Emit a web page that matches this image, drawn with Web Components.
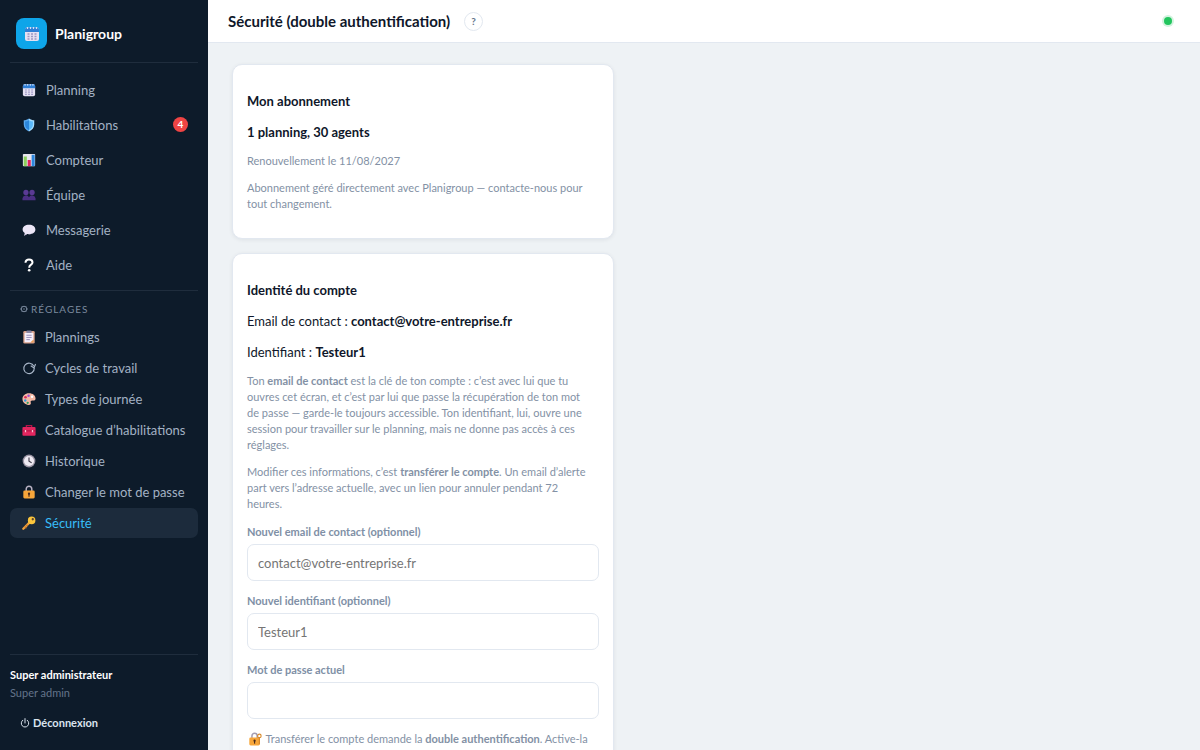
<!DOCTYPE html>
<html lang="fr">
<head>
<meta charset="utf-8">
<meta name="viewport" content="width=device-width, initial-scale=1">
<title>Planigroup</title>
<style>
   body {
      margin: 0;
      font-family: Lato, "Liberation Sans", sans-serif;
      font-size: 13px;
      line-height: 20px;
      color: #0f172a;
      background: #eef2f5;
   }
</style>
</head>
<body>

<plani-app>
   <plani-sidebar slot="sidebar">
      <plani-link icon="calendar">Planning</plani-link>
      <plani-link icon="shield" badge="4">Habilitations</plani-link>
      <plani-link icon="chart">Compteur</plani-link>
      <plani-link icon="people">Équipe</plani-link>
      <plani-link icon="bubble">Messagerie</plani-link>
      <plani-link icon="question">Aide</plani-link>

      <plani-link slot="settings" small icon="clipboard">Plannings</plani-link>
      <plani-link slot="settings" small icon="cycle">Cycles de travail</plani-link>
      <plani-link slot="settings" small icon="palette">Types de journée</plani-link>
      <plani-link slot="settings" small icon="toolbox">Catalogue d’habilitations</plani-link>
      <plani-link slot="settings" small icon="clock">Historique</plani-link>
      <plani-link slot="settings" small icon="lock">Changer le mot de passe</plani-link>
      <plani-link slot="settings" small active icon="key">Sécurité</plani-link>

      <span slot="user">Super administrateur</span>
      <span slot="role">Super admin</span>
   </plani-sidebar>

   <plani-topbar slot="topbar">Sécurité (double authentification)</plani-topbar>

   <plani-card>
      <span slot="title">Mon abonnement</span>
      <p><b>1 planning, 30 agents</b></p>
      <p class="hint">Renouvellement le 11/08/2027</p>
      <p class="hint">Abonnement géré directement avec Planigroup — contacte-nous pour tout changement.</p>
   </plani-card>

   <plani-card>
      <span slot="title">Identité du compte</span>
      <p>Email de contact : <b>contact@votre-entreprise.fr</b></p>
      <p>Identifiant : <b>Testeur1</b></p>
      <p class="hint">Ton <b>email de contact</b> est la clé de ton compte : c’est avec lui que tu ouvres cet écran, et c’est par lui que passe la récupération de ton mot de passe — garde-le toujours accessible. Ton identifiant, lui, ouvre une session pour travailler sur le planning, mais ne donne pas accès à ces réglages.</p>
      <p class="hint">Modifier ces informations, c’est <b>transférer le compte</b>. Un email d’alerte part vers l’adresse actuelle, avec un lien pour annuler pendant 72 heures.</p>
      <plani-field type="email" label="Nouvel email de contact (optionnel)" placeholder="contact@votre-entreprise.fr"></plani-field>
      <plani-field type="text" label="Nouvel identifiant (optionnel)" placeholder="Testeur1"></plani-field>
      <plani-field type="password" label="Mot de passe actuel"></plani-field>
      <p class="hint"><plani-icon name="lockkey"></plani-icon> Transférer le compte demande la <b>double authentification</b>. Active-la</p>
   </plani-card>
</plani-app>

<script>
const icons = {
   calendar: `
      <rect x="1" y="1.500" width="14" height="13.500" rx="2" fill="#e4e0f2"/>
      <path d="M1 6V3.500a2 2 0 0 1 2-2h10a2 2 0 0 1 2 2V6z" fill="#2f7fd6"/>
      <path d="M3.500 1v2M6.500 1v2M9.500 1v2M12.500 1v2" stroke="#cfe0f5" stroke-width="1.200"/>
      <path d="M3.500 8h2M7 8h2M10.500 8h2M3.500 10.500h2M7 10.500h2M10.500 10.500h2M3.500 13h2M7 13h2M10.500 13h2" stroke="#9d97c4" stroke-width="1.300"/>`,
   shield: `
      <path d="M8 .5C6 2 4 2.500 2 2.500v5c0 3.700 2.500 6.500 6 8z" fill="#5aa9ee"/>
      <path d="M8 .5c2 1.500 4 2 6 2v5c0 3.700-2.500 6.500-6 8z" fill="#a3dcff"/>
      <path d="M8 2.500C6.500 3.500 5 4 3.500 4v3.500c0 2.700 1.700 5 4.500 6.300z" fill="#2b86da"/>
      <path d="M8 2.500c1.500 1 3 1.500 4.500 1.500v3.500c0 2.700-1.700 5-4.500 6.300z" fill="#5ab8fa"/>`,
   chart: `
      <rect x="1" y="1" width="14" height="14" rx="1" fill="#e8e6ef"/>
      <rect x="2" y="4" width="3.500" height="11" fill="#8ccf5c"/>
      <rect x="6.500" y="8" width="3.500" height="7" fill="#e0245e"/>
      <rect x="11" y="2" width="3.500" height="13" fill="#2c86dc"/>`,
   people: `
      <circle cx="4.500" cy="5" r="3" fill="#5a3a94"/>
      <circle cx="11.500" cy="5" r="3" fill="#5a3a94"/>
      <path d="M0.500 14v-2a4 4 0 0 1 7.500-1.500A4 4 0 0 1 15.500 12v2z" fill="#4b2f83"/>`,
   bubble: `
      <path d="M8 2c4.200 0 7.300 2.300 7.300 5.400S12.200 12.800 8 12.800c-.8 0-1.500-.1-2.200-.2L2.500 14.500l.6-3.200C1.600 10.300.7 9 .7 7.400.7 4.300 3.800 2 8 2z" fill="#ece6f6"/>
      <path d="M4 12.200c4.500 1.200 9.500-.5 11-3.500-.8 2.500-3.600 4.100-7 4.100-.8 0-1.500-.1-2.200-.2L2.500 14.500z" fill="#c9bede"/>`,
   question: `
      <path d="M4 5.300C4 3 5.700 1.800 8 1.800s4 1.300 4 3.300c0 2.600-3.800 2.500-3.800 5.900" fill="none" stroke="#fff" stroke-width="2.300"/>
      <circle cx="8.200" cy="14" r="1.500" fill="#fff"/>`,
   clipboard: `
      <rect x="1.500" y="1" width="13" height="14.500" rx="1.500" fill="#d9a088"/>
      <path d="M3 3h10v8l-3 3H3z" fill="#f4effb"/>
      <path d="M13 11v3h-3z" fill="#f0a04b"/>
      <rect x="5" y="0.500" width="6" height="3" rx="1" fill="#8a86a3"/>
      <path d="M5 6h6M5 8.500h6M5 11h4" stroke="#8f83b5" stroke-width="1"/>`,
   cycle: `
      <path d="M13.500 6A6 6 0 1 0 14 8" fill="none" stroke="#a9b7c9" stroke-width="1.300"/>
      <path d="M15.500 3.500 13.700 8 10 5.500" fill="none" stroke="#a9b7c9" stroke-width="1.300"/>`,
   palette: `
      <path d="M8 1.500c4.500 0 7.500 2.500 7.500 6 0 2-1.500 2.500-3 2.200-2-.4-3 .6-2.500 2.300.6 2-.5 3-2.500 2.800C3.500 14.400.5 11.500.5 8S3.500 1.500 8 1.500z" fill="#f3b8a4"/>
      <circle cx="4" cy="6" r="1.500" fill="#d92c5a"/>
      <circle cx="7.500" cy="4.200" r="1.400" fill="#a04bd0"/>
      <circle cx="11.500" cy="5.500" r="1.400" fill="#fff"/>
      <circle cx="3.700" cy="9.700" r="1.400" fill="#2c9be0"/>
      <circle cx="6.500" cy="12.300" r="1.300" fill="#27a35b"/>`,
   toolbox: `
      <path d="M5 5V3h6v2" fill="none" stroke="#b3154a" stroke-width="1.500"/>
      <rect x="0.500" y="4.500" width="15" height="10" rx="1.200" fill="#e3265f"/>
      <path d="M.5 9h15" stroke="#a5103f" stroke-width="1"/>
      <path d="M4 8v2.500M12 8v2.500" stroke="#f9c0d2" stroke-width="1.500"/>`,
   clock: `
      <circle cx="8" cy="8" r="7.300" fill="#9a94a3"/>
      <circle cx="8" cy="8" r="5.800" fill="#eeeaf2"/>
      <path d="M8 4v4.300l3 1.700" fill="none" stroke="#3c3846" stroke-width="1.300"/>`,
   lock: `
      <path d="M4.800 7V4.500a3.200 3.200 0 0 1 6.400 0V7" fill="none" stroke="#b9b3c4" stroke-width="1.700"/>
      <rect x="1.500" y="6.300" width="13" height="9" rx="1.500" fill="#f7a63a"/>
      <circle cx="8" cy="10" r="1.300" fill="#4a2b1c"/>
      <path d="M8 10v3.300" stroke="#4a2b1c" stroke-width="1.300"/>`,
   lockkey: `
      <path d="M4.500 7V4.500a3 3 0 0 1 6 0V7" fill="none" stroke="#a59eb2" stroke-width="1.700"/>
      <rect x="1.500" y="6.300" width="12" height="9" rx="1.500" fill="#f7a63a"/>
      <circle cx="7.500" cy="10" r="1.300" fill="#4a2b1c"/>
      <path d="M7.500 10v3.300" stroke="#4a2b1c" stroke-width="1.300"/>
      <circle cx="13" cy="4.500" r="2" fill="none" stroke="#d98a2b" stroke-width="1.300"/>
      <path d="M13 6.500V14" stroke="#d98a2b" stroke-width="1.400"/>`,
   key: `
      <path d="M9 7 1.500 14.500" stroke="#f2a33c" stroke-width="2.600" stroke-linecap="round"/>
      <path d="m3 12 2 2M5 10l1.500 1.500" stroke="#c9772a" stroke-width="1.300"/>
      <circle cx="11" cy="5" r="4.300" fill="#fbc53c"/>
      <circle cx="12.300" cy="3.700" r="1.300" fill="#5b4330"/>`,
   gear: `
      <circle cx="8" cy="8" r="5.500" fill="none" stroke="currentColor" stroke-width="2"/>
      <circle cx="8" cy="8" r="1.500" fill="currentColor"/>
      <path d="M0 8h2.500M13.500 8H16M3.500 2.500l1 1.500M12.500 2.500l-1 1.500M3.500 13.500l1-1.500M12.500 13.500l-1-1.500" stroke="currentColor" stroke-width="1.600"/>`,
   power: `
      <path d="M4.500 3.500a6 6 0 1 0 7 0M8 1v7" fill="none" stroke="currentColor" stroke-width="1.600" stroke-linecap="round"/>`
};


/* == [ base ] 
      == == == == == == == == == */
class PlaniElement extends HTMLElement {
   constructor() {
      super();
      this.attachShadow( { mode: "open" } );
   }
   connectedCallback() {
      const tag = document.createElement( "template" );
      tag.innerHTML = this.render();
      this.shadowRoot.replaceChildren( tag.content.cloneNode( true ) );
   }
   attr( name ) {
      return this.getAttribute( name ) || "";
   }
}


/* == [ icon ] 
      == == == == == == == == == */
class PlaniIcon extends PlaniElement {
   render() {
      return `
         <style>
            :host {
               display: inline-block;
               flex: none;
               width: var( --icon-size, 14px );
               height: var( --icon-size, 14px );
            }
            svg {
               display: block;
               width: 100%;
               height: 100%;
            }
         </style>
         <svg viewBox="0 0 16 16" aria-hidden="true">${ icons[ this.attr( "name" ) ] }</svg>`;
   }
}


/* == [ app ] 
      == == == == == == == == == */
class PlaniApp extends PlaniElement {
   render() {
      return `
         <style>
            :host {
               display: grid;
               grid-template-columns: 208px minmax( 0, 1fr );
               height: 100vh;
            }
            .page {
               display: flex;
               flex-direction: column;
               min-height: 0;
            }
            main {
               flex: 1;
               display: flex;
               flex-direction: column;
               gap: 14px;
               min-height: 0;
               padding: 21px 24px;
               overflow-y: auto;
               scrollbar-width: none;
            }
         </style>
         <slot name="sidebar"></slot>
         <div class="page">
            <slot name="topbar"></slot>
            <main><slot></slot></main>
         </div>`;
   }
}


/* == [ sidebar ] 
      == == == == == == == == == */
class PlaniSidebar extends PlaniElement {
   render() {
      return `
         <style>
            :host {
               display: flex;
               flex-direction: column;
               padding: 0 10px;
               background: #0d1b2a;
               color: #fff;
            }
            .brand {
               display: flex;
               align-items: center;
               gap: 8px;
               padding: 18px 6px 13px;
               border-bottom: 1px solid #1f2d3d;
               font-size: 14px;
               font-weight: 700;
            }
            .logo {
               display: grid;
               place-items: center;
               width: 31px;
               height: 31px;
               border-radius: 8px;
               background: #0ea5e9;
               --icon-size: 16px;
            }
            nav {
               display: flex;
               flex-direction: column;
            }
            .main {
               gap: 2px;
               padding: 10px 0 9px;
            }
            .settings {
               gap: 1px;
               border-top: 1px solid #1f2d3d;
            }
            h2 {
               display: flex;
               align-items: center;
               gap: 3px;
               margin: 0;
               padding: 10px 10px 4px;
               font-size: 10px;
               font-weight: 400;
               line-height: 16px;
               letter-spacing: 1px;
               color: #7b8a9e;
               --icon-size: 8px;
            }
            footer {
               margin-top: auto;
               padding: 11px 0 18px;
               border-top: 1px solid #1f2d3d;
               font-size: 11px;
               line-height: 18px;
            }
            .user {
               font-weight: 700;
            }
            .role {
               color: #64748b;
            }
            button {
               display: flex;
               align-items: center;
               gap: 3px;
               margin-top: 12px;
               padding: 0 10px;
               border: 0;
               background: none;
               font: inherit;
               font-weight: 700;
               color: #dbe4ee;
               --icon-size: 10px;
            }
         </style>
         <div class="brand">
            <span class="logo"><plani-icon name="calendar"></plani-icon></span>
            <span>Planigroup</span>
         </div>
         <nav class="main"><slot></slot></nav>
         <nav class="settings">
            <h2><plani-icon name="gear"></plani-icon>RÉGLAGES</h2>
            <slot name="settings"></slot>
         </nav>
         <footer>
            <div class="user"><slot name="user"></slot></div>
            <div class="role"><slot name="role"></slot></div>
            <button type="button"><plani-icon name="power"></plani-icon>Déconnexion</button>
         </footer>`;
   }
}


/* == [ sidebar link ] 
      == == == == == == == == == */
class PlaniLink extends PlaniElement {
   render() {
      const badge = this.attr( "badge" );

      return `
         <style>
            :host {
               display: block;
            }
            a {
               display: flex;
               align-items: center;
               gap: 10px;
               height: 33px;
               padding: 0 10px 0 12px;
               border-radius: 7px;
               color: #a3b2c4;
               text-decoration: none;
               white-space: nowrap;
            }
            :host( [small] ) a {
               gap: 9px;
               height: 30px;
            }
            :host( [active] ) a {
               background: #1c2b3c;
               color: #38bdf8;
            }
            .badge {
               margin-left: auto;
               width: 15px;
               border-radius: 8px;
               background: #ef4444;
               color: #fff;
               font-size: 10px;
               font-weight: 700;
               line-height: 15px;
               text-align: center;
            }
         </style>
         <a href="#">
            <plani-icon name="${ this.attr( "icon" ) }"></plani-icon>
            <slot></slot>
            ${ badge ? `<span class="badge">${ badge }</span>` : "" }
         </a>`;
   }
}


/* == [ topbar ] 
      == == == == == == == == == */
class PlaniTopbar extends PlaniElement {
   render() {
      return `
         <style>
            :host {
               display: block;
            }
            header {
               display: flex;
               align-items: center;
               gap: 14px;
               height: 42px;
               padding: 0 28px 0 20px;
               border-bottom: 1px solid #e2e8f0;
               background: #fff;
            }
            h1 {
               margin: 0;
               font-size: 15px;
               font-weight: 700;
            }
            button {
               width: 19px;
               height: 19px;
               padding: 0;
               border: 1px solid #e2e8f0;
               border-radius: 50%;
               background: #fff;
               color: #64748b;
               font: inherit;
               font-size: 10px;
               font-weight: 700;
               line-height: 16px;
            }
            .status {
               margin-left: auto;
               width: 8px;
               height: 8px;
               border-radius: 50%;
               background: #22c55e;
               box-shadow: 0 0 0 2px #d3f3df;
            }
         </style>
         <header>
            <h1><slot></slot></h1>
            <button type="button" aria-label="Aide">?</button>
            <span class="status"></span>
         </header>`;
   }
}


/* == [ card ] 
      == == == == == == == == == */
class PlaniCard extends PlaniElement {
   render() {
      return `
         <style>
            :host {
               display: block;
               flex: none;
               box-sizing: border-box;
               width: 100%;
               max-width: 382px;
               padding: 15px 14px;
               border: 1px solid #e2e8f0;
               border-radius: 10px;
               background: #fff;
               box-shadow: 0 1px 4px #0f172a12;
            }
            h3 {
               margin: 11px 0;
               font-size: 13px;
               font-weight: 700;
            }
            ::slotted( p ) {
               margin: 11px 0;
            }
            ::slotted( .hint ) {
               padding-right: 8px;
               font-size: 11px;
               line-height: 16px;
               color: #8391a5;
            }
         </style>
         <h3><slot name="title"></slot></h3>
         <slot></slot>`;
   }
}


/* == [ field ] 
      == == == == == == == == == */
class PlaniField extends PlaniElement {
   render() {
      return `
         <style>
            :host {
               display: block;
               margin: 12px 0;
            }
            label {
               display: block;
               margin-bottom: 4px;
               font-size: 11px;
               font-weight: 700;
               line-height: 16px;
               color: #8090a6;
            }
            input {
               display: block;
               box-sizing: border-box;
               width: 100%;
               height: 37px;
               padding: 0 10px;
               border: 1px solid #e2e8f0;
               border-radius: 7px;
               background: #fff;
               font: inherit;
               color: #0f172a;
            }
            input::placeholder {
               color: #757575;
            }
         </style>
         <label for="field">${ this.attr( "label" ) }</label>
         <input id="field" type="${ this.attr( "type" ) }" placeholder="${ this.attr( "placeholder" ) }">`;
   }
}


customElements.define( "plani-icon", PlaniIcon );
customElements.define( "plani-app", PlaniApp );
customElements.define( "plani-sidebar", PlaniSidebar );
customElements.define( "plani-link", PlaniLink );
customElements.define( "plani-topbar", PlaniTopbar );
customElements.define( "plani-card", PlaniCard );
customElements.define( "plani-field", PlaniField );
</script>
<style>
   .hint plani-icon {
      margin: 0 1px;
      vertical-align: -3px;
   }
</style>
</body>
</html>
